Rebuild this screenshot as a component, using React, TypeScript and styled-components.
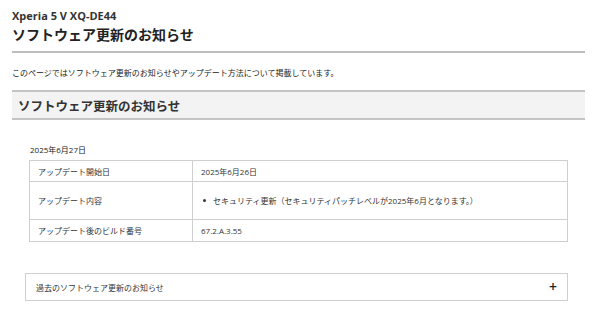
import React from "react";
import styled, { createGlobalStyle } from "styled-components";

const GlobalStyle = createGlobalStyle`
  body {
    margin: 0;
    background: #fff;
    color: #222;
    font-family: "Open Sans", "Noto Sans CJK JP", sans-serif;
  }
`;

const Page = styled.main`
  padding: 9px 15px 0 12px;
`;

const Model = styled.div`
  font-size: 11px;
  font-weight: 700;
  line-height: 14px;
  color: #333;
`;

const Title = styled.h1`
  margin: 2px 0 0;
  font-size: 14px;
  font-weight: 700;
  line-height: 20px;
  padding-bottom: 6px;
  border-bottom: 2px solid #bdbdbd;
`;

const Lead = styled.p`
  margin: 14px 0 0;
  font-size: 8px;
  line-height: 12px;
`;

const SectionHeader = styled.h2`
  margin: 11px 0 0;
  padding: 0 6px;
  height: 26px;
  display: flex;
  align-items: center;
  background: #f3f3f3;
  border-top: 2px solid #c4c4c4;
  border-bottom: 2px solid #c4c4c4;
  font-size: 12.5px;
  font-weight: 700;
  color: #333;
`;

const Notice = styled.section`
  margin: 24px 17px 0 17px;
`;

const DateLine = styled.div`
  font-size: 8px;
  line-height: 12px;
  padding-left: 1px;
`;

const Table = styled.table`
  margin-top: 4px;
  width: 100%;
  border-collapse: collapse;
  font-size: 8px;
`;

const Cell = styled.td<{ $label?: boolean }>`
  border: 1px solid #cfcfcf;
  padding: 0 8px;
  width: ${(p) => (p.$label ? "146px" : "auto")};
  vertical-align: middle;
  color: #333;
`;

const Row = styled.tr<{ $h: number }>`
  height: ${(p) => p.$h}px;
`;

const Bullets = styled.ul`
  margin: 0;
  padding: 0;
  list-style: none;

  li::before {
    content: "";
    display: inline-block;
    width: 3px;
    height: 3px;
    border-radius: 50%;
    background: #333;
    vertical-align: middle;
    margin: 0 7px 2px 2px;
  }
`;

const Accordion = styled.div`
  margin: 31px 17px 0 13px;
  height: 26px;
  border: 1px solid #cfcfcf;
  display: flex;
  align-items: center;
  justify-content: space-between;
  padding: 0 10px;
  font-size: 8px;
  color: #333;
`;

const Plus = styled.span`
  font-size: 14px;
  font-weight: 600;
  line-height: 1;
  color: #222;
`;

export default function App() {
  return (
    <>
      <GlobalStyle />
      <Page>
        <Model>Xperia 5 V XQ-DE44</Model>
        <Title>ソフトウェア更新のお知らせ</Title>
        <Lead>このページではソフトウェア更新のお知らせやアップデート方法について掲載しています。</Lead>
        <SectionHeader>ソフトウェア更新のお知らせ</SectionHeader>
        <Notice>
          <DateLine>2025年6月27日</DateLine>
          <Table>
            <tbody>
              <Row $h={21}>
                <Cell $label>アップデート開始日</Cell>
                <Cell>2025年6月26日</Cell>
              </Row>
              <Row $h={38}>
                <Cell $label>アップデート内容</Cell>
                <Cell>
                  <Bullets>
                    <li>セキュリティ更新（セキュリティパッチレベルが2025年6月となります。）</li>
                  </Bullets>
                </Cell>
              </Row>
              <Row $h={22}>
                <Cell $label>アップデート後のビルド番号</Cell>
                <Cell>67.2.A.3.55</Cell>
              </Row>
            </tbody>
          </Table>
        </Notice>
        <Accordion>
          <span>過去のソフトウェア更新のお知らせ</span>
          <Plus>+</Plus>
        </Accordion>
      </Page>
    </>
  );
}
